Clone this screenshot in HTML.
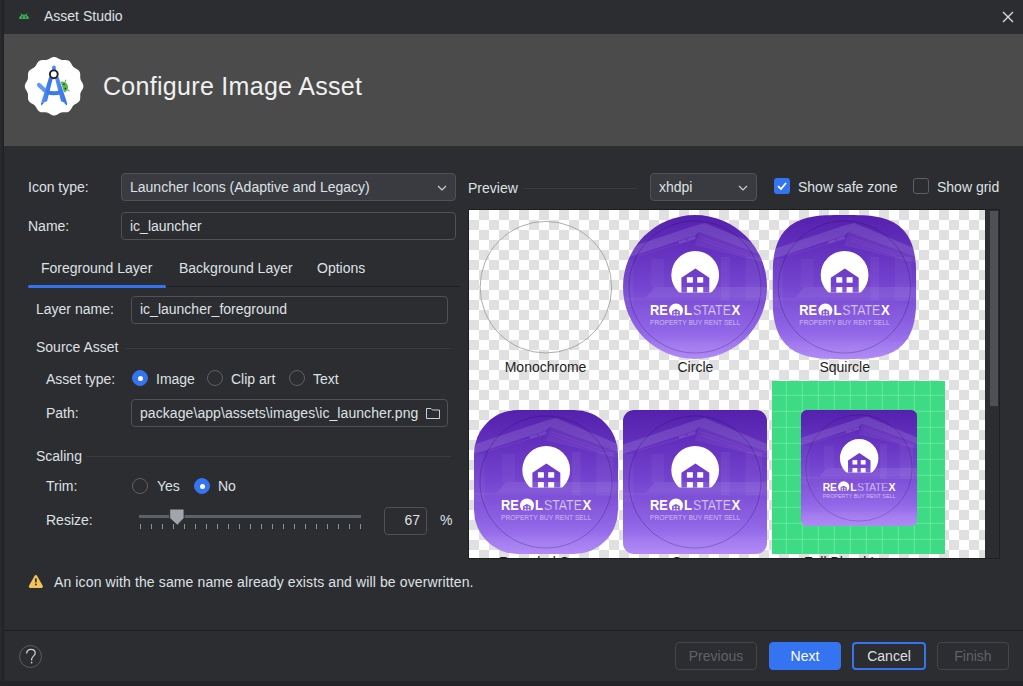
<!DOCTYPE html>
<html><head><meta charset="utf-8">
<style>
*{box-sizing:border-box;margin:0;padding:0}
html,body{width:1023px;height:686px;overflow:hidden;background:#2b2d30}
body{position:relative;font-family:"Liberation Sans",sans-serif;font-size:14px;line-height:14px;color:#dfe1e5}
.a{position:absolute;white-space:pre}
.fld{position:absolute;border:1px solid #4e5157;border-radius:4px;background:#2b2d30}
.combo{background:#393b40;border-color:#4e5157}
.sep{position:absolute;height:1px;background:#393b40}
.radio{position:absolute;width:16px;height:16px;border-radius:50%;border:1px solid #5e6065;background:#2b2d30}
.radio.on{background:#3574f0;border-color:#3574f0}
.radio.on:after{content:"";position:absolute;left:4.5px;top:4.5px;width:5px;height:5px;border-radius:50%;background:#fff}
.btn{position:absolute;top:642px;height:28px;border-radius:4px;border:1px solid #43454a;text-align:center;line-height:26px;color:#5f6369}
.lbl{position:absolute;white-space:pre;color:#1e1e1e;font-size:14px}
</style></head>
<body>
<!-- left border -->
<div class="a" style="left:0;top:0;width:4px;height:686px;background:linear-gradient(90deg,#2a2b2e 0 1px,#252629 1px 3px,#232322 3px 4px)"></div>
<!-- title bar -->
<svg class="a" style="left:18px;top:12px" width="12" height="8" viewBox="0 0 12 8"><path d="M1 7 C1 4.3 3.2 2.6 6 2.6 C8.8 2.6 11 4.3 11 7 Z" fill="#3aa757"/><path d="M2.8 1.2 L4 3.2 M9.2 1.2 L8 3.2" stroke="#3aa757" stroke-width="0.9"/><circle cx="4.2" cy="5" r="0.7" fill="#2b2d30"/><circle cx="7.8" cy="5" r="0.7" fill="#2b2d30"/></svg>
<div class="a" style="left:44px;top:9px">Asset Studio</div>
<svg class="a" style="left:1002px;top:11px" width="12" height="12" viewBox="0 0 12 12"><path d="M1 1 L11 11 M11 1 L1 11" stroke="#dfe1e5" stroke-width="1.3"/></svg>

<!-- header -->
<div class="a" style="left:4px;top:34px;width:1019px;height:112px;background:#4b4b4b"></div>
<svg class="a" style="left:24px;top:56.5px" width="60" height="60" viewBox="0 0 60 60">
<defs><linearGradient id="lg" x1="0" y1="0" x2="1" y2="0"><stop offset="0" stop-color="#5592f6"/><stop offset="1" stop-color="#2f6ee6"/></linearGradient></defs>
<path d="M59.40 29.20 L59.34 29.97 L59.17 30.72 L58.90 31.47 L58.55 32.19 L58.16 32.89 L57.75 33.58 L57.35 34.25 L56.99 34.92 L56.69 35.58 L56.47 36.27 L56.32 36.97 L56.25 37.70 L56.22 38.45 L56.23 39.23 L56.25 40.03 L56.24 40.84 L56.17 41.64 L56.04 42.42 L55.81 43.16 L55.47 43.85 L55.04 44.48 L54.51 45.05 L53.91 45.56 L53.25 46.02 L52.55 46.43 L51.85 46.82 L51.17 47.20 L50.53 47.60 L49.94 48.03 L49.40 48.50 L48.93 49.04 L48.50 49.63 L48.10 50.27 L47.72 50.95 L47.33 51.65 L46.92 52.35 L46.46 53.01 L45.95 53.61 L45.38 54.14 L44.75 54.57 L44.06 54.91 L43.32 55.14 L42.54 55.27 L41.74 55.34 L40.93 55.35 L40.13 55.33 L39.35 55.32 L38.60 55.35 L37.87 55.42 L37.17 55.57 L36.48 55.79 L35.82 56.09 L35.15 56.45 L34.48 56.85 L33.79 57.26 L33.09 57.65 L32.37 58.00 L31.62 58.27 L30.87 58.44 L30.10 58.50 L29.33 58.44 L28.58 58.27 L27.83 58.00 L27.11 57.65 L26.41 57.26 L25.72 56.85 L25.05 56.45 L24.38 56.09 L23.72 55.79 L23.03 55.57 L22.33 55.42 L21.60 55.35 L20.85 55.32 L20.07 55.33 L19.27 55.35 L18.46 55.34 L17.66 55.27 L16.88 55.14 L16.14 54.91 L15.45 54.57 L14.82 54.14 L14.25 53.61 L13.74 53.01 L13.28 52.35 L12.87 51.65 L12.48 50.95 L12.10 50.27 L11.70 49.63 L11.27 49.04 L10.80 48.50 L10.26 48.03 L9.67 47.60 L9.03 47.20 L8.35 46.82 L7.65 46.43 L6.95 46.02 L6.29 45.56 L5.69 45.05 L5.16 44.48 L4.73 43.85 L4.39 43.16 L4.16 42.42 L4.03 41.64 L3.96 40.84 L3.95 40.03 L3.97 39.23 L3.98 38.45 L3.95 37.70 L3.88 36.97 L3.73 36.27 L3.51 35.58 L3.21 34.92 L2.85 34.25 L2.45 33.58 L2.04 32.89 L1.65 32.19 L1.30 31.47 L1.03 30.72 L0.86 29.97 L0.80 29.20 L0.86 28.43 L1.03 27.68 L1.30 26.93 L1.65 26.21 L2.04 25.51 L2.45 24.82 L2.85 24.15 L3.21 23.48 L3.51 22.82 L3.73 22.13 L3.88 21.43 L3.95 20.70 L3.98 19.95 L3.97 19.17 L3.95 18.37 L3.96 17.56 L4.03 16.76 L4.16 15.98 L4.39 15.24 L4.73 14.55 L5.16 13.92 L5.69 13.35 L6.29 12.84 L6.95 12.38 L7.65 11.97 L8.35 11.58 L9.03 11.20 L9.67 10.80 L10.26 10.37 L10.80 9.90 L11.27 9.36 L11.70 8.77 L12.10 8.13 L12.48 7.45 L12.87 6.75 L13.28 6.05 L13.74 5.39 L14.25 4.79 L14.82 4.26 L15.45 3.83 L16.14 3.49 L16.88 3.26 L17.66 3.13 L18.46 3.06 L19.27 3.05 L20.07 3.07 L20.85 3.08 L21.60 3.05 L22.33 2.98 L23.03 2.83 L23.72 2.61 L24.38 2.31 L25.05 1.95 L25.72 1.55 L26.41 1.14 L27.11 0.75 L27.83 0.40 L28.58 0.13 L29.33 -0.04 L30.10 -0.10 L30.87 -0.04 L31.62 0.13 L32.37 0.40 L33.09 0.75 L33.79 1.14 L34.48 1.55 L35.15 1.95 L35.82 2.31 L36.48 2.61 L37.17 2.83 L37.87 2.98 L38.60 3.05 L39.35 3.08 L40.13 3.07 L40.93 3.05 L41.74 3.06 L42.54 3.13 L43.32 3.26 L44.06 3.49 L44.75 3.83 L45.38 4.26 L45.95 4.79 L46.46 5.39 L46.92 6.05 L47.33 6.75 L47.72 7.45 L48.10 8.13 L48.50 8.77 L48.93 9.36 L49.40 9.90 L49.94 10.37 L50.53 10.80 L51.17 11.20 L51.85 11.58 L52.55 11.97 L53.25 12.38 L53.91 12.84 L54.51 13.35 L55.04 13.92 L55.47 14.55 L55.81 15.24 L56.04 15.98 L56.17 16.76 L56.24 17.56 L56.25 18.37 L56.23 19.17 L56.22 19.95 L56.25 20.70 L56.32 21.43 L56.47 22.13 L56.69 22.82 L56.99 23.48 L57.35 24.15 L57.75 24.82 L58.16 25.51 L58.55 26.21 L58.90 26.93 L59.17 27.68 L59.34 28.43Z" fill="#fff"/>
<g transform="translate(38.4 30.2) rotate(-18)">
<path d="M0 -5.6 A5.6 5.6 0 0 1 0 5.6 Z" fill="#55b848"/>
<path d="M3.8 -3.8 L5.8 -6 M3.8 3.8 L5.8 6" stroke="#55b848" stroke-width="1"/>
<circle cx="2.4" cy="-2.3" r="0.8" fill="#1a2a1a"/><circle cx="2.4" cy="2.3" r="0.8" fill="#1a2a1a"/>
</g>
<path d="M15 28 L20.6 33.2" stroke="#5e97f6" stroke-width="4.2" stroke-linecap="round"/>
<path d="M25.3 19.5 L16.9 46.5 L23.1 44.3 L28.6 21.7 Z" fill="url(#lg)"/>
<path d="M34.4 19.5 L43.2 46.5 L37 44.3 L31.1 21.7 Z" fill="url(#lg)"/>
<path d="M23.2 33 Q30 35.6 36.6 33 L37.6 37 Q30 39.4 22.2 37 Z" fill="#3b7ae9"/>
<path d="M16.9 46.5 L17.4 48.6 L20.5 45.2 Z M43.2 46.5 L42.7 48.6 L39.6 45.2 Z" fill="#2a62d2"/>
<rect x="28.1" y="8.4" width="3.7" height="8" rx="1.85" fill="#4a8af5"/>
<circle cx="29.8" cy="17.3" r="3.9" fill="#fff" stroke="#202124" stroke-width="1.9"/>
</svg>
<div class="a" style="left:103px;top:74px;font-size:25px;line-height:25px;color:#f0f0f0;letter-spacing:0.3px">Configure Image Asset</div>

<!-- left form -->
<div class="a" style="left:28px;top:180px">Icon type:</div>
<div class="fld combo" style="left:121px;top:173px;width:335px;height:28px"></div>
<div class="a" style="left:130px;top:180px">Launcher Icons (Adaptive and Legacy)</div>
<svg class="a" style="left:437px;top:185px" width="10" height="6" viewBox="0 0 10 6"><path d="M1 1 L5 5 L9 1" stroke="#ced0d6" stroke-width="1.2" fill="none"/></svg>

<div class="a" style="left:28px;top:219px">Name:</div>
<div class="fld" style="left:121px;top:212px;width:335px;height:28px"></div>
<div class="a" style="left:130px;top:219px">ic_launcher</div>

<div class="a" style="left:41px;top:261px">Foreground Layer</div>
<div class="a" style="left:179px;top:261px">Background Layer</div>
<div class="a" style="left:317px;top:261px">Options</div>
<div class="a" style="left:166px;top:286px;width:294px;height:1px;background:#1e1f22"></div>
<div class="a" style="left:28px;top:285px;width:138px;height:3px;border-radius:2px;background:#3574f0"></div>

<div class="a" style="left:36px;top:302px">Layer name:</div>
<div class="fld" style="left:131px;top:296px;width:317px;height:28px"></div>
<div class="a" style="left:140px;top:302px">ic_launcher_foreground</div>

<div class="a" style="left:36px;top:340px">Source Asset</div>
<div class="sep" style="left:126px;top:348px;width:325px"></div>

<div class="a" style="left:46px;top:372px">Asset type:</div>
<div class="radio on" style="left:132px;top:370px"></div>
<div class="a" style="left:156px;top:372px">Image</div>
<div class="radio" style="left:207px;top:370px"></div>
<div class="a" style="left:231px;top:372px">Clip art</div>
<div class="radio" style="left:289px;top:370px"></div>
<div class="a" style="left:313px;top:372px">Text</div>

<div class="a" style="left:46px;top:406px">Path:</div>
<div class="fld" style="left:131px;top:399px;width:317px;height:28px"></div>
<div class="a" style="left:140px;top:406px;letter-spacing:0.07px">package\app\assets\images\ic_launcher.png</div>
<svg class="a" style="left:425px;top:406px" width="16" height="14" viewBox="0 0 16 14"><path d="M1.5 2.5 h4.5 l1.5 1.5 h7 v8.5 h-13 z" stroke="#ced0d6" stroke-width="1" fill="none"/></svg>

<div class="a" style="left:36px;top:449px">Scaling</div>
<div class="sep" style="left:86px;top:456px;width:365px"></div>

<div class="a" style="left:46px;top:479px">Trim:</div>
<div class="radio" style="left:132px;top:478px"></div>
<div class="a" style="left:157px;top:479px">Yes</div>
<div class="radio on" style="left:194px;top:478px"></div>
<div class="a" style="left:218px;top:479px">No</div>

<div class="a" style="left:46px;top:513px">Resize:</div>
<div class="a" style="left:139px;top:515px;width:222px;height:3px;background:#5d6067"></div><div class="a" style="left:140px;top:524px;width:1px;height:5px;background:#8c9097"></div><div class="a" style="left:151px;top:524px;width:1px;height:5px;background:#8c9097"></div><div class="a" style="left:162px;top:524px;width:1px;height:5px;background:#8c9097"></div><div class="a" style="left:173px;top:524px;width:1px;height:5px;background:#8c9097"></div><div class="a" style="left:184px;top:524px;width:1px;height:5px;background:#8c9097"></div><div class="a" style="left:195px;top:524px;width:1px;height:5px;background:#8c9097"></div><div class="a" style="left:206px;top:524px;width:1px;height:5px;background:#8c9097"></div><div class="a" style="left:217px;top:524px;width:1px;height:5px;background:#8c9097"></div><div class="a" style="left:228px;top:524px;width:1px;height:5px;background:#8c9097"></div><div class="a" style="left:239px;top:524px;width:1px;height:5px;background:#8c9097"></div><div class="a" style="left:250px;top:524px;width:1px;height:5px;background:#8c9097"></div><div class="a" style="left:261px;top:524px;width:1px;height:5px;background:#8c9097"></div><div class="a" style="left:272px;top:524px;width:1px;height:5px;background:#8c9097"></div><div class="a" style="left:283px;top:524px;width:1px;height:5px;background:#8c9097"></div><div class="a" style="left:294px;top:524px;width:1px;height:5px;background:#8c9097"></div><div class="a" style="left:305px;top:524px;width:1px;height:5px;background:#8c9097"></div><div class="a" style="left:316px;top:524px;width:1px;height:5px;background:#8c9097"></div><div class="a" style="left:327px;top:524px;width:1px;height:5px;background:#8c9097"></div><div class="a" style="left:338px;top:524px;width:1px;height:5px;background:#8c9097"></div><div class="a" style="left:349px;top:524px;width:1px;height:5px;background:#8c9097"></div><div class="a" style="left:360px;top:524px;width:1px;height:5px;background:#8c9097"></div><svg class="a" style="left:168px;top:507px" width="18" height="20" viewBox="0 0 18 20"><path d="M1.7 2 H16.1 V11.2 L9.3 18.3 L1.7 11.2 Z" fill="#a1a4ab" stroke="#2b2d30" stroke-width="1"/></svg>

<div class="fld" style="left:384px;top:507px;width:43px;height:28px"></div>
<div class="a" style="left:384px;top:513px;width:36px;text-align:right">67</div>
<div class="a" style="left:440px;top:513px">%</div>

<svg class="a" style="left:28px;top:574px" width="16" height="15" viewBox="0 0 16 15"><path d="M7.85 2.4 L13.5 12.5 L2.2 12.5 Z" fill="#f2c55c" stroke="#f2c55c" stroke-width="2.8" stroke-linejoin="round"/><rect x="6.95" y="4.3" width="1.8" height="4.1" fill="#3d3424"/><rect x="6.95" y="9.6" width="1.8" height="1.7" fill="#3d3424"/></svg>
<div class="a" style="left:54px;top:575px;letter-spacing:0.12px">An icon with the same name already exists and will be overwritten.</div>

<!-- preview header -->
<div class="a" style="left:468px;top:181px">Preview</div>
<div class="sep" style="left:524px;top:188px;width:113px"></div>
<div class="fld combo" style="left:650px;top:173px;width:107px;height:28px"></div>
<div class="a" style="left:659px;top:180px">xhdpi</div>
<svg class="a" style="left:738px;top:185px" width="10" height="6" viewBox="0 0 10 6"><path d="M1 1 L5 5 L9 1" stroke="#ced0d6" stroke-width="1.2" fill="none"/></svg>
<div class="a" style="left:774px;top:178px;width:16px;height:16px;border-radius:3px;background:#3574f0"></div>
<svg class="a" style="left:774px;top:178px" width="16" height="16" viewBox="0 0 16 16"><path d="M4 8.2 L7 11 L12 5" stroke="#fff" stroke-width="1.8" fill="none"/></svg>
<div class="a" style="left:798px;top:180px">Show safe zone</div>
<div class="a" style="left:913px;top:178px;width:16px;height:16px;border-radius:3px;border:1px solid #5e6065"></div>
<div class="a" style="left:937px;top:180px">Show grid</div>

<!-- preview area -->
<div class="a" style="left:468px;top:209px;width:532px;height:350px;background:#1e1f22"></div>
<div id="prev" class="a" style="left:469px;top:210px;width:516px;height:348px;overflow:hidden;background:repeating-conic-gradient(#e0e0e0 0 25%,#fff 0 50%) 0 0/20px 20px"><svg width="516" height="348" style="position:absolute;left:0;top:0"><defs>
<linearGradient id="pg" x1="0" y1="0" x2="0" y2="1">
 <stop offset="0" stop-color="#5420ad"/>
 <stop offset="0.45" stop-color="#7140cc"/>
 <stop offset="0.8" stop-color="#9065e6"/>
 <stop offset="1" stop-color="#ae86f6"/>
</linearGradient>
<g id="art">
 <rect x="-72" y="-72" width="144" height="144" fill="url(#pg)"/>
 <g fill="#fff">
  <path d="M-72 -37.4 L0 -61.5 L10 -64 L72 -38 L72 -30 L4 -55 L0 -51.5 L-72 -27.9 Z" opacity="0.12"/>
  <path d="M4 -55 L72 -30 L72 -24 L0 -41.6 Z" opacity="0.05"/>
  <path d="M-16.4 -45.8 L-9 -48 L-8.2 -45.4 L-15.6 -43.2 Z M-8 -48.6 L0 -51 L0.8 -48.4 L-7.2 -46 Z" opacity="0.12"/>
  <rect x="26" y="-30" width="8.6" height="43.6" opacity="0.05"/>
  <rect x="50.4" y="-30" width="16.8" height="43.6" opacity="0.045"/>
  <rect x="-72" y="-28" width="10.5" height="48" opacity="0.04"/>
  <rect x="-43.7" y="-28" width="12.7" height="28" opacity="0.04"/>
  <path d="M-48.9 10.5 L-40.5 0 L72 0 L72 10.5 Z" opacity="0.08"/>
  <path d="M-72 10.5 L72 10.5 L72 13.6 L-72 13.6 Z" opacity="0.04"/>
  <path d="M-72 54.6 L72 54.6 L72 72 L-72 72 Z" opacity="0.04"/>
 </g>
 <g fill="none" stroke="#e070e0" stroke-opacity="0.22" stroke-width="0.7">
  <path d="M-58 -31 L0 -48"/>
  <path d="M6 -50 L68 -28 M6 -47 L66 -26"/>
 </g>
 <g>
  <clipPath id="sunclip"><rect x="-40" y="-60" width="80" height="65.5"/></clipPath>
  <path clip-path="url(#sunclip)" fill="#fff" fill-rule="evenodd" d="M0.2 -12.1 m-23.9 0 a23.9 23.9 0 1 0 47.8 0 a23.9 23.9 0 1 0 -47.8 0 Z M-13.6 5.5 L-13.6 -9.2 L0.4 -18.5 L14.3 -9.2 L14.3 5.5 Z"/>
  <rect x="-8.1" y="-9.8" width="6" height="5.5" fill="#fff"/>
  <rect x="2.2" y="-9.8" width="6" height="5.5" fill="#fff"/>
  <rect x="-8.1" y="0.1" width="6" height="5.4" fill="#fff"/>
  <rect x="2.2" y="0.1" width="6" height="5.4" fill="#fff"/>
 </g>
 <g font-family="Liberation Sans" fill="#fff">
  <text x="-45.1" y="28.1" font-size="14" font-weight="bold" textLength="17.8" lengthAdjust="spacingAndGlyphs">RE</text>
  <text x="-10.9" y="28.1" font-size="14" font-weight="bold" textLength="8" lengthAdjust="spacingAndGlyphs">L</text>
  <text x="-2.1" y="28.1" font-size="14" textLength="38" lengthAdjust="spacingAndGlyphs" fill="#f4eeff" stroke="#8456d8" stroke-width="0.4">STATE</text>
  <text x="36.5" y="28.1" font-size="14" font-weight="bold" textLength="8.8" lengthAdjust="spacingAndGlyphs">X</text>
  <text x="-45.1" y="37.6" font-size="6.4" textLength="90.4" lengthAdjust="spacingAndGlyphs" fill="#d6c6f6" stroke="#8a5ddb" stroke-width="0.1">PROPERTY BUY RENT SELL</text>
 </g>
 <g>
  <clipPath id="aclip"><rect x="-30" y="10" width="60" height="18.3"/></clipPath>
  <path clip-path="url(#aclip)" fill="#fff" fill-rule="evenodd" d="M-19 23.5 m-7 0 a7 7 0 1 0 14 0 a7 7 0 1 0 -14 0 Z M-22.9 28.6 L-22.9 23.9 L-19.1 22.1 L-15.2 23.9 L-15.2 28.6 Z"/>
  <rect x="-21.4" y="24.4" width="1.6" height="1.4" fill="#fff"/><rect x="-18.4" y="24.4" width="1.6" height="1.4" fill="#fff"/>
  <rect x="-21.4" y="26.9" width="1.6" height="1.4" fill="#fff"/><rect x="-18.4" y="26.9" width="1.6" height="1.4" fill="#fff"/>
 </g>
 <circle cx="0" cy="0" r="66" fill="none" stroke="#1a0a40" stroke-opacity="0.38" stroke-width="0.7"/>
</g>
<clipPath id="cC"><path d="M-72 0 A72 72 0 1 0 72 0 A72 72 0 1 0 -72 0 Z"/></clipPath><clipPath id="cS"><path d="M72.00 0.00 L71.97 9.52 L71.86 14.67 L71.69 18.89 L71.44 22.58 L71.13 25.93 L70.75 29.00 L70.30 31.87 L69.78 34.56 L69.19 37.10 L68.52 39.50 L67.79 41.78 L66.99 43.95 L66.12 46.02 L65.17 47.99 L64.16 49.86 L63.07 51.65 L61.91 53.36 L60.67 54.98 L59.36 56.52 L57.98 57.98 L56.52 59.36 L54.98 60.67 L53.36 61.91 L51.65 63.07 L49.86 64.16 L47.99 65.17 L46.02 66.12 L43.95 66.99 L41.78 67.79 L39.50 68.52 L37.10 69.19 L34.56 69.78 L31.87 70.30 L29.00 70.75 L25.93 71.13 L22.58 71.44 L18.89 71.69 L14.67 71.86 L9.52 71.97 L0.00 72.00 L-9.52 71.97 L-14.67 71.86 L-18.89 71.69 L-22.58 71.44 L-25.93 71.13 L-29.00 70.75 L-31.87 70.30 L-34.56 69.78 L-37.10 69.19 L-39.50 68.52 L-41.78 67.79 L-43.95 66.99 L-46.02 66.12 L-47.99 65.17 L-49.86 64.16 L-51.65 63.07 L-53.36 61.91 L-54.98 60.67 L-56.52 59.36 L-57.98 57.98 L-59.36 56.52 L-60.67 54.98 L-61.91 53.36 L-63.07 51.65 L-64.16 49.86 L-65.17 47.99 L-66.12 46.02 L-66.99 43.95 L-67.79 41.78 L-68.52 39.50 L-69.19 37.10 L-69.78 34.56 L-70.30 31.87 L-70.75 29.00 L-71.13 25.93 L-71.44 22.58 L-71.69 18.89 L-71.86 14.67 L-71.97 9.52 L-72.00 0.00 L-71.97 -9.52 L-71.86 -14.67 L-71.69 -18.89 L-71.44 -22.58 L-71.13 -25.93 L-70.75 -29.00 L-70.30 -31.87 L-69.78 -34.56 L-69.19 -37.10 L-68.52 -39.50 L-67.79 -41.78 L-66.99 -43.95 L-66.12 -46.02 L-65.17 -47.99 L-64.16 -49.86 L-63.07 -51.65 L-61.91 -53.36 L-60.67 -54.98 L-59.36 -56.52 L-57.98 -57.98 L-56.52 -59.36 L-54.98 -60.67 L-53.36 -61.91 L-51.65 -63.07 L-49.86 -64.16 L-47.99 -65.17 L-46.02 -66.12 L-43.95 -66.99 L-41.78 -67.79 L-39.50 -68.52 L-37.10 -69.19 L-34.56 -69.78 L-31.87 -70.30 L-29.00 -70.75 L-25.93 -71.13 L-22.58 -71.44 L-18.89 -71.69 L-14.67 -71.86 L-9.52 -71.97 L-0.00 -72.00 L9.52 -71.97 L14.67 -71.86 L18.89 -71.69 L22.58 -71.44 L25.93 -71.13 L29.00 -70.75 L31.87 -70.30 L34.56 -69.78 L37.10 -69.19 L39.50 -68.52 L41.78 -67.79 L43.95 -66.99 L46.02 -66.12 L47.99 -65.17 L49.86 -64.16 L51.65 -63.07 L53.36 -61.91 L54.98 -60.67 L56.52 -59.36 L57.98 -57.98 L59.36 -56.52 L60.67 -54.98 L61.91 -53.36 L63.07 -51.65 L64.16 -49.86 L65.17 -47.99 L66.12 -46.02 L66.99 -43.95 L67.79 -41.78 L68.52 -39.50 L69.19 -37.10 L69.78 -34.56 L70.30 -31.87 L70.75 -29.00 L71.13 -25.93 L71.44 -22.58 L71.69 -18.89 L71.86 -14.67 L71.97 -9.52Z"/></clipPath><clipPath id="cR"><path d="M-28 -72 H28 A44 44 0 0 1 72 -28 V28 A44 44 0 0 1 28 72 H-28 A44 44 0 0 1 -72 28 V-28 A44 44 0 0 1 -28 -72 Z"/></clipPath><clipPath id="cQ"><path d="M-61 -72 H61 A11 11 0 0 1 72 -61 V61 A11 11 0 0 1 61 72 H-61 A11 11 0 0 1 -72 61 V-61 A11 11 0 0 1 -61 -72 Z"/></clipPath><clipPath id="cF"><path d="M-64.6 -72 H64.6 A7.4 7.4 0 0 1 72 -64.6 V64.6 A7.4 7.4 0 0 1 64.6 72 H-64.6 A7.4 7.4 0 0 1 -72 64.6 V-64.6 A7.4 7.4 0 0 1 -64.6 -72 Z"/></clipPath></defs>
<circle cx="76.89999999999998" cy="77.19999999999999" r="65.8" fill="none" stroke="#a3a3a3" stroke-width="0.9"/>
<g transform="translate(226,77)" clip-path="url(#cC)"><use href="#art"/></g>
<g transform="translate(375.4,77)" clip-path="url(#cS)"><use href="#art"/></g>
<g transform="translate(77,272)" clip-path="url(#cR)"><use href="#art"/></g>
<g transform="translate(226,272)" clip-path="url(#cQ)"><use href="#art"/></g>
<g transform="translate(303,171)"><rect width="173" height="173" fill="#3ddc84"/><rect x="13.80" y="0" width="1" height="173" fill="#fff" opacity="0.22"/><rect x="0" y="13.80" width="173" height="1" fill="#fff" opacity="0.22"/><rect x="29.80" y="0" width="1" height="173" fill="#fff" opacity="0.22"/><rect x="0" y="29.80" width="173" height="1" fill="#fff" opacity="0.22"/><rect x="45.80" y="0" width="1" height="173" fill="#fff" opacity="0.22"/><rect x="0" y="45.80" width="173" height="1" fill="#fff" opacity="0.22"/><rect x="61.80" y="0" width="1" height="173" fill="#fff" opacity="0.22"/><rect x="0" y="61.80" width="173" height="1" fill="#fff" opacity="0.22"/><rect x="77.80" y="0" width="1" height="173" fill="#fff" opacity="0.22"/><rect x="0" y="77.80" width="173" height="1" fill="#fff" opacity="0.22"/><rect x="93.80" y="0" width="1" height="173" fill="#fff" opacity="0.22"/><rect x="0" y="93.80" width="173" height="1" fill="#fff" opacity="0.22"/><rect x="109.80" y="0" width="1" height="173" fill="#fff" opacity="0.22"/><rect x="0" y="109.80" width="173" height="1" fill="#fff" opacity="0.22"/><rect x="125.80" y="0" width="1" height="173" fill="#fff" opacity="0.22"/><rect x="0" y="125.80" width="173" height="1" fill="#fff" opacity="0.22"/><rect x="141.80" y="0" width="1" height="173" fill="#fff" opacity="0.22"/><rect x="0" y="141.80" width="173" height="1" fill="#fff" opacity="0.22"/><rect x="157.80" y="0" width="1" height="173" fill="#fff" opacity="0.22"/><rect x="0" y="157.80" width="173" height="1" fill="#fff" opacity="0.22"/></g>
<g transform="translate(390,258) scale(0.8056)" clip-path="url(#cF)"><use href="#art"/></g>
<g font-family="Liberation Sans" font-size="14" fill="#1e1e1e">
<text x="35.69999999999999" y="162.39999999999998">Monochrome</text>
<text x="208.5" y="162.39999999999998">Circle</text>
<text x="350.4" y="162.39999999999998">Squircle</text>
<text x="30" y="357.4">Rounded Square</text>
<text x="203" y="357.4">Square</text>
<text x="335" y="357.4">Full Bleed Layers</text>
</g>
</svg></div>
<div class="a" style="left:985px;top:210px;width:14px;height:348px;background:#2b2d30"></div>
<div class="a" style="left:990px;top:211px;width:8px;height:195px;background:#4e5055"></div>

<!-- footer -->
<div class="a" style="left:4px;top:630px;width:1019px;height:1px;background:#1e1f22"></div>
<div class="a" style="left:19px;top:645px;width:23px;height:23px;border-radius:50%;border:1px solid #5a5d63"></div>
<svg class="a" style="left:19px;top:645px" width="24" height="24" viewBox="0 0 24 24"><path d="M7.6 8.6 C7.6 5.9 9.5 4.3 11.9 4.3 C14.4 4.3 16.2 5.9 16.2 8.1 C16.2 10.9 12.6 11.4 12.6 14.6 L12.6 15.4" stroke="#ced0d6" stroke-width="1.25" fill="none"/><circle cx="12.6" cy="17.6" r="0.9" fill="#ced0d6"/></svg>
<div class="btn" style="left:675px;width:82px">Previous</div>
<div class="btn" style="left:769px;width:72px;background:#3574f0;border-color:#3574f0;color:#fff">Next</div>
<div class="btn" style="left:852px;width:74px;border:2px solid #3574f0;line-height:24px;color:#dfe1e5">Cancel</div>
<div class="btn" style="left:937px;width:72px">Finish</div>
<div class="a" style="left:0;top:681px;width:1023px;height:5px;background:#232427"></div>
</body></html>
